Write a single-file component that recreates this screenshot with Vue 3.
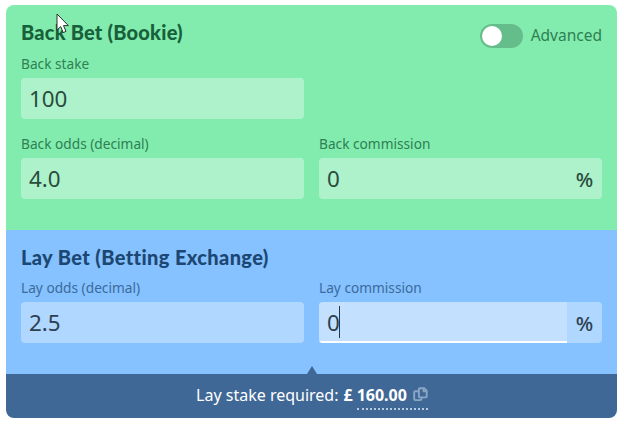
<script setup>
import { ref, computed } from 'vue';

const advanced = ref(false);
const backStake = ref('100');
const backOdds = ref('4.0');
const backCommission = ref('0');
const layOdds = ref('2.5');
const layCommission = ref('0');

// stake * (back odds - back commission) / (lay odds - lay commission)
const layStake = computed(() => {
  const back = 1 + (backOdds.value - 1) * (1 - backCommission.value / 100);
  return ((backStake.value * back) / (layOdds.value - layCommission.value / 100)).toFixed(2);
});
</script>

<template>
  <div class="calculator">
    <section class="panel back">
      <div class="panel_header">
        <h2 class="back_title">Back Bet (Bookie)</h2>
        <div class="toggle" @click="advanced = !advanced">
          <span class="switch" :class="{ on: advanced }"><span class="knob"></span></span>
          <span class="toggle_label">Advanced</span>
        </div>
      </div>
      <div class="fields">
        <div class="field">
          <label>Back stake</label>
          <div class="control"><span class="value">{{ backStake }}</span></div>
        </div>
      </div>
      <div class="fields">
        <div class="field">
          <label>Back odds (decimal)</label>
          <div class="control"><span class="value">{{ backOdds }}</span></div>
        </div>
        <div class="field">
          <label>Back commission</label>
          <div class="control">
            <span class="value">{{ backCommission }}</span>
            <span class="unit">%</span>
          </div>
        </div>
      </div>
    </section>

    <section class="panel lay">
      <div class="panel_header">
        <h2 class="lay_title">Lay Bet (Betting Exchange)</h2>
      </div>
      <div class="fields">
        <div class="field">
          <label>Lay odds (decimal)</label>
          <div class="control"><span class="value">{{ layOdds }}</span></div>
        </div>
        <div class="field">
          <label>Lay commission</label>
          <div class="control">
            <span class="value focused">{{ layCommission }}<span class="caret"></span></span>
            <span class="unit">%</span>
          </div>
        </div>
      </div>
    </section>

    <footer class="result">
      <span class="result_label">Lay stake required:</span>
      <strong class="currency">£</strong>
      <span class="copy">
        <strong>{{ layStake }}</strong>
        <svg class="copy_icon" width="15" height="15" viewBox="0 0 15 15">
          <path d="M5.7 4.2H2.3Q1.2 4.2 1.2 5.3V12Q1.2 13.1 2.3 13.1H7.4Q8.5 13.1 8.5 12V10.6" />
          <path d="M6.9 1.2H11.2L13.7 3.7V9.4Q13.7 10.4 12.7 10.4H6.9Q5.9 10.4 5.9 9.4V2.2Q5.9 1.2 6.9 1.2Z" />
          <path d="M10.6 1.2V4.3H13.7" />
        </svg>
      </span>
    </footer>

    <svg class="cursor" width="14" height="22" viewBox="0 0 14 22">
      <path d="M1 1V17L4.7 13.6L7.2 19.6L10 18.4L7.5 12.6H12.4Z" />
    </svg>
  </div>
</template>

<style>
body {
  background: #fff;
}
</style>

<style scoped>
.calculator {
  position: relative;
  width: 611px;
  height: 413px;
  margin: 5px 0 0 6px;
  display: flex;
  flex-direction: column;
  border-radius: 8px;
  overflow: hidden;
  font-family: "Noto Sans", "Open Sans", sans-serif;
}

.panel {
  box-sizing: border-box;
  padding: 15.5px 15px 0;
}

.back {
  height: 224.5px;
  background: #82ecaf;
  color: #2d8051;
}

.lay {
  height: 144px;
  background: #85c2ff;
  color: #3c6b9c;
}

.panel_header {
  height: 33px;
  display: flex;
  justify-content: space-between;
}

h2 {
  margin: 0;
  font-family: Lato, sans-serif;
  font-size: 20px;
  font-weight: 900;
  line-height: 24px;
  white-space: nowrap;
}

.back_title {
  margin-top: -1px;
  color: #17603a;
  letter-spacing: 0.2px;
}

.lay_title {
  color: #1d4773;
  letter-spacing: 0.37px;
}

.toggle {
  display: flex;
  height: 24px;
  margin-top: 3px;
  gap: 8px;
}

.switch {
  box-sizing: border-box;
  width: 43px;
  height: 24px;
  padding: 2px;
  border-radius: 12px;
  background: #66bd8c;
}

.switch.on {
  padding-left: 21px;
}

.knob {
  display: block;
  width: 20px;
  height: 20px;
  border-radius: 50%;
  background: #fff;
}

.toggle_label {
  font-size: 15.5px;
  line-height: 23px;
}

.fields {
  display: grid;
  grid-template-columns: 283px 283px;
  column-gap: 15px;
  margin-bottom: 15px;
}

.field {
  display: flex;
  flex-direction: column;
}

label {
  height: 24px;
  font-size: 13.7px;
  line-height: 20px;
}

.lay .panel_header {
  height: 32.5px;
}

.control {
  display: flex;
  height: 41px;
  border-radius: 4px;
  overflow: hidden;
  background: rgba(255, 255, 255, 0.35);
  color: #2a4c3d;
}

.lay .control {
  color: #2c4050;
}

.value {
  box-sizing: border-box;
  flex: 1;
  padding-left: 8px;
  font-size: 22.4px;
  line-height: 41px;
}

.focused {
  display: flex;
  align-items: flex-start;
  background: rgba(255, 255, 255, 0.25);
  border-bottom: 2px solid #fff;
}

.caret {
  width: 1px;
  height: 32px;
  margin: 4px 0 0 -1px;
  background: #263746;
}

.unit {
  width: 35px;
  font-size: 20.5px;
  font-weight: 500;
  line-height: 43px;
  text-align: center;
}

.result {
  position: relative;
  height: 44.5px;
  display: flex;
  align-items: flex-start;
  justify-content: center;
  padding-left: 1px;
  background: #3f6896;
  color: #fff;
  font-size: 16px;
  line-height: 42px;
}

/* small pointer above the result bar */
.result::before {
  content: "";
  position: absolute;
  top: -8px;
  left: 301px;
  border: 5px solid transparent;
  border-top: 0;
  border-bottom: 8px solid #3f6896;
}

.currency {
  margin: 0 4px 0 5px;
}

.copy {
  display: flex;
  height: 34px;
  border-bottom: 2px dotted #b8cbe0;
}

.copy_icon {
  margin: 13px 0 0 6px;
  fill: none;
  stroke: #8ba6c4;
  stroke-width: 1.9;
}

.cursor {
  position: absolute;
  left: 50px;
  top: 8px;
  fill: #fff;
  stroke: #26342d;
  stroke-width: 1;
}
</style>
